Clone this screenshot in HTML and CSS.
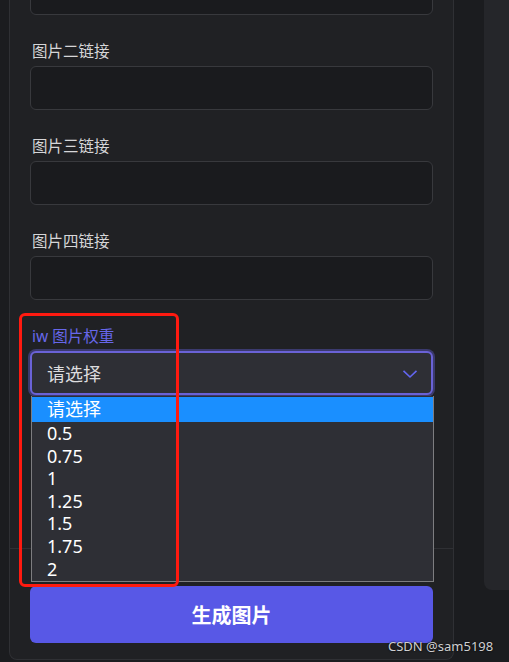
FILE: index.html
```html
<!DOCTYPE html>
<html lang="zh-CN">
<head>
<meta charset="utf-8">
<title>生成图片</title>
<link rel="stylesheet" href="styles.css">
</head>
<body>
<div class="page">
  <div class="strip"></div>
  <section class="panel">
    <div class="scroll">
      <div class="field first">
        <div class="input"></div>
      </div>
      <div class="field">
        <label class="label">图片二链接</label>
        <div class="input"></div>
      </div>
      <div class="field">
        <label class="label">图片三链接</label>
        <div class="input"></div>
      </div>
      <div class="field">
        <label class="label">图片四链接</label>
        <div class="input"></div>
      </div>
      <div class="field">
        <label class="label accent">iw 图片权重</label>
        <div class="select">
          <span>请选择</span>
          <svg class="chev" width="16" height="10" viewBox="0 0 16 10"><path d="M1.5 1.8 L8 8 L14.5 1.8" fill="none" stroke="#6366f1" stroke-width="1.6"/></svg>
        </div>
      </div>
    </div>
    <div class="footer">
      <button class="btn">生成图片</button>
    </div>
  </section>
  <div class="gutter"></div>
  <div class="side"></div>
</div>

<ul class="dropdown">
  <li class="active">请选择</li>
  <li>0.5</li>
  <li>0.75</li>
  <li>1</li>
  <li>1.25</li>
  <li>1.5</li>
  <li>1.75</li>
  <li>2</li>
</ul>

<div class="mark"></div>
<div class="watermark">CSDN @sam5198</div>
</body>
</html>
```

FILE: styles.css
```css
* { box-sizing: border-box; }
html, body {
  margin: 0;
  padding: 0;
  width: 509px;
  height: 662px;
  overflow: hidden;
  background: #1b1c1f;
  font-family: "Noto Sans", "Noto Sans CJK SC", sans-serif;
}
.page {
  display: flex;
  height: 662px;
  align-items: flex-start;
}
.strip { width: 9px; flex: none; }
.panel {
  width: 445px;
  flex: none;
  height: 660px;
  background: #202124;
  border: 1px solid #2f3034;
  border-top: none;
  border-radius: 0 0 8px 8px;
  display: flex;
  flex-direction: column;
  overflow: hidden;
}
.scroll {
  height: 548px;
  flex: none;
  padding: 0 20px;
  overflow: hidden;
}
.field {
  display: flex;
  flex-direction: column;
  gap: 5px;
  margin-bottom: 26px;
}
.field.first { margin-top: -29px; }
.label {
  font-size: 15.5px;
  line-height: 20px;
  color: #d6d6d8;
  padding-left: 2px;
}
.label.accent { color: #6767ea; }
.input {
  height: 44px;
  background: #1a1b1e;
  border: 1px solid #38393d;
  border-radius: 6px;
}
.select {
  height: 44px;
  background: #2e2f35;
  border: 2px solid #6a62d6;
  box-shadow: 0 0 0 2px #3b3a6e;
  border-radius: 6px;
  display: flex;
  align-items: center;
  justify-content: space-between;
  padding: 0 13px 0 15px;
  font-size: 18px;
  color: #dcdcde;
}
.chev { margin-top: 2px; }
.footer {
  flex: 1;
  border-top: 1px solid #2f3034;
  padding: 37px 20px 0;
}
.btn {
  display: block;
  width: 403px;
  height: 57px;
  border: none;
  border-radius: 6px;
  background: #5858e6;
  color: #ffffff;
  font-family: "Noto Sans CJK SC", "Noto Sans", sans-serif;
  font-size: 20px;
  font-weight: 700;
  padding: 0;
}
.gutter { width: 30px; flex: none; }
.side {
  flex: 1;
  height: 590px;
  background: #25262a;
  border-radius: 0 0 0 8px;
}
.dropdown {
  position: absolute;
  left: 31px;
  top: 396px;
  width: 403px;
  height: 186px;
  margin: 0;
  padding: 1px 0 0;
  list-style: none;
  background: #2e2f35;
  border: 1px solid #7d7d80;
  border-top: none;
  font-size: 18px;
  color: #ffffff;
}
.dropdown li {
  height: 22.6px;
  line-height: 22.6px;
  padding-left: 15px;
}
.dropdown li.active {
  height: 25px;
  line-height: 25px;
  background: #1a8fff;
}
.mark {
  position: absolute;
  left: 19px;
  top: 313px;
  width: 160px;
  height: 274px;
  border: 3px solid #ff1a10;
  border-radius: 6px;
}
.watermark {
  position: absolute;
  left: 388px;
  top: 637px;
  font-family: "Noto Sans", sans-serif;
  font-size: 13px;
  line-height: 18px;
  color: #cfcfd1;
  text-shadow: 0 0 2px #000;
}
```
